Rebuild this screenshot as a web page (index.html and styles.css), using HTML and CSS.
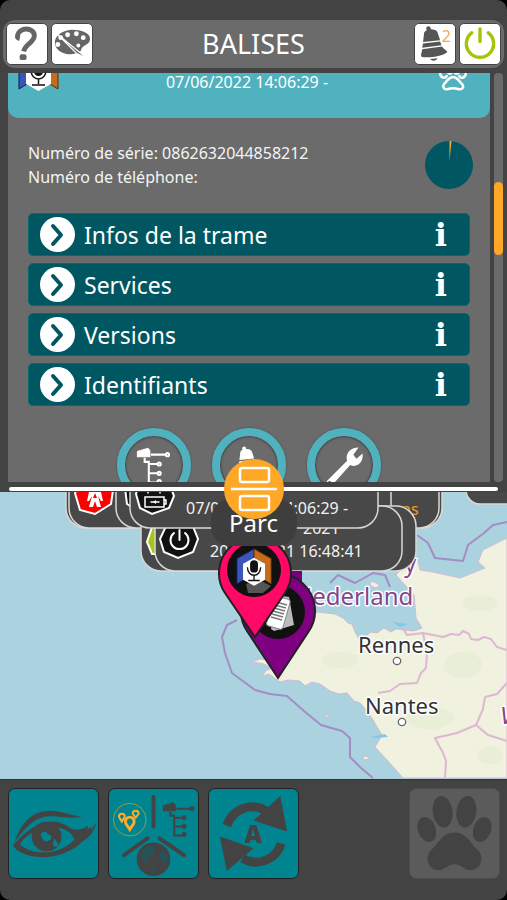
FILE: index.html
```html
<!DOCTYPE html>
<html lang="fr">
<head>
<meta charset="utf-8">
<meta name="viewport" content="width=device-width, initial-scale=1">
<title>Balises</title>
<link rel="stylesheet" href="styles.css">
</head>
<body>
<svg width="0" height="0" class="defs" aria-hidden="true">
  <defs>
    <g id="tree" fill="none" stroke="currentColor" stroke-width="2">
      <path d="M1 4l10-3 2 2v6H1z" fill="currentColor" stroke-width="1"/>
      <path d="M14 7h14M8 10v4h4v20h9M12 16h8M12 25h8"/>
      <circle cx="30" cy="7" r="1.500"/><circle cx="22" cy="16" r="1.500"/><circle cx="22" cy="25" r="1.500"/><circle cx="22" cy="33" r="1.500"/>
    </g>
    <g id="bell">
      <circle cx="15" cy="4" r="2.500"/>
      <path d="M10 10c0-6 13-7 15-2l3 9-19 2z"/>
      <path d="M9 20.500l19-2 1.500 4-21.500 3z"/>
      <path d="M8 27l22-3c2 3 5 4 6 6-3 4-23 8-29 5-1-2 1-5 1-8z"/>
      <path d="M17 38c2 3 7 2 8-1z"/>
    </g>
    <g id="mic">
      <path d="M20.500-7L1 4v29l8-5V10l11.500-6z" fill="#3d55b8" stroke="#111c50"/>
      <path d="M20.500-7L40 4v29l-8-5V10L20.500 4z" fill="#c66b1a" stroke="#5b2c00"/>
      <path d="M20.500 3L33 10v18l-12.500 7L8 28V10z" fill="#fff"/>
      <rect x="16" y="6" width="9" height="14" rx="4.500" fill="#111"/>
      <path d="M13 14c0 12 15 12 15 0M20.500 23v5M14 29h13" fill="none" stroke="#111" stroke-width="1.500"/>
    </g>
  </defs>
</svg>
<div class="app">
  <header class="topbar">
    <div class="group">
      <button class="tool" aria-label="Aide"><svg viewBox="0 0 41 41"><path d="M13 15c-4-1-2-6 1-8 6-4 14-1 14 5 0 7-9 8-11 16" fill="none" stroke="#666" stroke-width="5"/><rect x="13" y="31" width="7" height="6" rx="2" fill="#666"/></svg></button>
      <button class="tool" aria-label="Couleurs"><svg viewBox="0 0 41 41"><path d="M3 21C2 12 10 7 20 6c10 0 19 3 19 9 0 7-8 6-9 11 0 6-23 9-27-5z" fill="#666"/><g fill="#fff"><circle cx="9" cy="14" r="2.500"/><circle cx="16" cy="11" r="2.500"/><circle cx="25" cy="10" r="2.500"/><circle cx="32" cy="14" r="2.500"/><circle cx="6" cy="21" r="2.500"/><circle cx="27" cy="22" r="2"/></g><path d="M5 10l22 18 10 8-12-6z" fill="#666" stroke="#fff" stroke-width="1.200"/></svg></button>
    </div>
    <h1>BALISES</h1>
    <div class="group">
      <button class="tool" aria-label="Alertes"><svg viewBox="0 0 41 41"><use href="#bell" fill="#555" transform="translate(0 1) scale(.92)"/></svg><span class="count">2</span></button>
      <button class="tool" aria-label="Quitter"><svg viewBox="0 0 41 41"><path d="M12 9a14 14 0 1 0 17 0M20.500 5v13" fill="none" stroke="#a3c408" stroke-width="3.500" stroke-linecap="round"/></svg></button>
    </div>
  </header>

  <main class="panel">
    <section class="card">
      <div class="card-head">
        <svg class="badge" viewBox="0 0 41 18"><use href="#mic" y="-17"/></svg>
        <time>07/06/2022 14:06:29 -</time>
        <svg class="paw" viewBox="0 0 30 18" fill="none" stroke="#fff" stroke-width="2.500"><path d="M2 0c1 6 6 6 7 2M9-2c2 4 5 3 5 0M16-2c1 4 5 3 5 0M28 0c-1 6-6 6-7 2M15 4c5 0 6 5 9 7 3 4-1 6-4 5s-7-1-10 0-6-1-4-5c3-2 4-7 9-7z"/></svg>
      </div>
      <div class="card-body">
        <div class="summary">
          <p>Numéro de série: 0862632044858212<br>Numéro de téléphone:</p>
          <svg class="pie" viewBox="0 0 48 48"><circle cx="24" cy="24" r="24" fill="#005762"/><path d="M24.500 20V0h2z" fill="#f4ad35"/></svg>
        </div>
        <div class="rows">
          <button class="row"><span class="chevron"><svg viewBox="0 0 35 35"><path d="M13 9l8 9-8 9"/></svg></span><span class="label">Infos de la trame</span><span class="info">i</span></button>
          <button class="row"><span class="chevron"><svg viewBox="0 0 35 35"><path d="M13 9l8 9-8 9"/></svg></span><span class="label">Services</span><span class="info">i</span></button>
          <button class="row"><span class="chevron"><svg viewBox="0 0 35 35"><path d="M13 9l8 9-8 9"/></svg></span><span class="label">Versions</span><span class="info">i</span></button>
          <button class="row"><span class="chevron"><svg viewBox="0 0 35 35"><path d="M13 9l8 9-8 9"/></svg></span><span class="label">Identifiants</span><span class="info">i</span></button>
        </div>
        <div class="rounds">
          <button class="round" aria-label="Arborescence"><svg viewBox="0 0 56 56" color="#fff"><use href="#tree" x="11" y="11"/></svg></button>
          <button class="round" aria-label="Alerte"><svg viewBox="0 0 56 56"><use href="#bell" fill="#fff" transform="translate(12 9) scale(.75)"/></svg></button>
          <button class="round" aria-label="Réglages"><svg viewBox="0 0 56 56"><path d="M12 43l19-19c-2-7 3-13 11-13l-5 7 3 4 6-5c1 9-6 14-12 11L17 47c-4 3-8 0-5-4z" fill="#fff"/><circle cx="14" cy="45" r="1.500" fill="#555"/></svg></button>
        </div>
      </div>
    </section>
    <div class="track"><div class="thumb"></div></div>
  </main>

  <div class="divider">
    <button class="parc"><span class="split"><svg viewBox="0 0 60 60" fill="none" stroke="#fff" stroke-width="2.500"><rect x="16" y="9" width="29" height="14" rx="2"/><path d="M7 30h46"/><rect x="16" y="37" width="29" height="14" rx="2"/></svg></span>Parc</button>
  </div>

  <section class="map" aria-label="Carte">
    <svg viewBox="0 492 507 287" preserveAspectRatio="xMidYMid slice">
      <g class="land">
        <path d="M396 575l18-20 3 3 3 12 13 2 27 6 25-10-7-6 5-12 24-12v240H403l-16-18-12-13 7-12-5-8-4-7-6-9-7-8-6-2-7-8-8 1-9-3-10-7-8-2-7 4-5-5-12-1-8 2-11-8-6 2 2-5 7-3-8-4-12-2 8-3 9 1 14-27 35-21 17 2 8 4 5 5 4 1 3 8 4 7 8-4 4-3 6 1 7-5 7 4 5-3 8 1 10 1 8-3-6-10-2-23z"/>
        <path d="M371 581l5 2 4 3-5 2-5-3zM325 714l4 2-3 2zM363 757l4-1 2 3-5 1z"/>
      </g>
      <g fill="#e3edd0" opacity=".5"><ellipse cx="463" cy="665" rx="19" ry="13"/><ellipse cx="480" cy="603" rx="17" ry="8"/><ellipse cx="430" cy="718" rx="24" ry="11"/><ellipse cx="340" cy="660" rx="18" ry="8"/><ellipse cx="490" cy="755" rx="13" ry="9"/></g>
      <path d="M392 622l16 2-8 3zM371 737l14-3 3 3-13 1zM376 743l10-1" fill="#82c7ec"/>
      <g class="sea-border">
        <path d="M237 620l-10 5-5 12 3 16 7 20 23 17 15 4 17 2 17 15 17 14 21 6 8 7v19l11 11 12 10"/>
        <path d="M417 535l11 8 7 15 28 3 5-16 16-12 9-8 14-3M330 583l8-8 17 8 18-10 12 2 5 12"/>
      </g>
      <g class="region">
        <path d="M402 627l5 8 16-2 20 4 8-3 8 1 4-4 6 3 2 5 7 1 6-3 7 2 6 8 10 3M423 633l4 20-1 15-5 5-4 10-17 1-10 7-12 2M507 683l-10 11-12 3-2 12-7 16-19 8-22 5 8 15 3 8-1 17M476 725l12 10 19 6"/>
      </g>
      <g class="place">
        <text x="294" y="605" class="country">Nederland</text>
        <text x="404" y="572" class="country">y</text>
        <text x="500" y="724" class="country slant">V</text>
        <text x="358" y="653">Rennes</text>
        <text x="365" y="714">Nantes</text>
      </g>
      <g fill="#fff" stroke="#666" stroke-width="1.300"><circle cx="397" cy="661" r="3.700"/><circle cx="402" cy="722" r="3.700"/></g>

      <g class="plate">
        <rect x="466" y="440" width="80" height="64" rx="14"/>
        <rect x="66" y="440" width="376" height="88" rx="20"/>
        <rect x="69" y="440" width="370" height="88" rx="20"/>
      </g>
      <text x="392" y="515" class="stamp warn">ens</text>
      <path class="hex" d="M84 477h22l7 13-2 14-16 10-15-4-5-17z" fill="#f00"/>
      <path d="M89 492h12l2 9h-2l-3-5 3 11h-4l-2-6-2 6h-4l3-11-3 5h-2z" fill="#fff"/>
      <path d="M95 493l-2 5h4z" fill="#f00"/>
      <g class="plate">
        <rect x="116" y="440" width="275" height="88" rx="20"/>
        <rect x="141" y="506" width="275" height="65" rx="20"/>
      </g>
      <path class="hex" d="M125 488l2 16 13 8v-30z" fill="#111"/>
      <path class="hex" d="M152 527l-5 15 5 12h6v-27z" fill="#a9c514"/>
      <g class="plate"><rect x="155" y="506" width="247" height="65" rx="20"/></g>
      <text x="303" y="534" class="stamp">2021</text>
      <text x="210" y="557" class="stamp">20/11/2021 16:48:41</text>
      <path class="hex" d="M167 524h25l6 15-5 13-15 6-14-6-4-13z" fill="#111"/>
      <path d="M174 533a9 9 0 1 0 11 0M179.500 530v10" class="glyph"/>
      <g class="plate"><rect x="130" y="440" width="248" height="88" rx="20"/></g>
      <path class="hex" d="M140 478h27l7 18-5 12-17 6-12-6-4-14z" fill="#111"/>
      <path d="M145 497h19v10h-19zM164 500h2v4h-2M151 502h8M148 493v-5h12v5" class="glyph thin"/>
      <path d="M153 502l3-2v4z" fill="#fff"/>
      <text x="186" y="514" class="stamp">07/06/2022 14:06:29 -</text>

      <path d="M290 571h12v14h-12z" fill="#74007b"/>
      <g class="pin"><path d="M278 678l-31-47a37 37 0 1 1 62 0z" fill="#800082"/></g>
      <circle cx="278" cy="612" r="27" fill="#111"/>
      <path d="M271 629l4-34 14 2 5 28-20 6z" fill="#bbb"/>
      <rect x="270" y="597" width="17" height="31" rx="3" fill="#fff" stroke="#888" transform="rotate(16 278 612)"/>
      <path d="M276 602l11 3M275 605l11 3M274 608l11 3M273 611l11 3M272 614l11 3M271 617l11 3" stroke="#777" stroke-width="1.500"/>
      <g class="pin"><path d="M255 637l-30-44a36 36 0 1 1 60 0z" fill="#ff0866"/></g>
      <circle cx="254" cy="570" r="27" fill="#111"/>
      <path d="M246 584l13-4 12 6-8 7h-15z" fill="#555"/>
      <use href="#mic" transform="translate(236 555) scale(.88)"/>
    </svg>
  </section>

  <nav class="dock">
    <button class="tile" aria-label="Vue"><svg viewBox="0 0 90 90"><path d="M6 53C12 34 24 22 41 22c12 0 21 5 33 6-14 3-25-2-37 0C23 30 14 43 6 53z"/><path fill-rule="evenodd" d="M4 57c19-22 39-31 57-18 7 4 14 2 19-2l-1 4 5-3-1 4 5-8c-2 14-12 17-19 24-21 14-44 14-61 4zM11 56c12 11 40 12 55-5-6-18-42-16-55 5z"/><circle cx="38" cy="48" r="15"/><path d="M32 46c2-5 8-2 7 0 4-1 6 5 1 6-3 3-7-1-8-6zM46 50l4 6-3 3-3-3z" fill="#008490"/></svg></button>
    <button class="tile" aria-label="Modes"><svg viewBox="0 0 90 90"><g stroke="#434343" stroke-width="4" stroke-linecap="round"><path d="M45 8v30M39 50L15 67M51 50l25 17"/></g><circle cx="45" cy="71" r="17"/><path d="M34 61l10-4 3 6-7 5-1 8-6-6zM51 62l8 5-1 8-6-3zM43 78l6 2-4 6z" fill="#24545a"/><g color="#434343"><use href="#tree" x="54" y="13"/></g><g fill="none" stroke="#ffab2b"><circle cx="21" cy="31" r="16.500" stroke="#90a04a"/><path d="M21 41l-4-6a4.500 4.500 0 1 1 8 0z" stroke-width="3"/><path d="M13 33l-3-5a3 3 0 1 1 6 0zM27 29l-3-4a3 3 0 1 1 6 0z" stroke-width="2"/></g></svg></button>
    <button class="tile" aria-label="Actualisation automatique"><svg viewBox="0 0 90 90"><path d="M18 37c7-19 29-25 43-12M73 55c-5 17-25 24-39 15" fill="none" stroke="#434343" stroke-width="9"/><path d="M72 7l7 36-34-11zM11 48l34 12-27 23z"/></svg><span class="auto">A</span></button>
    <button class="tile off" aria-label="Animaux"><svg viewBox="0 0 90 90"><ellipse cx="33" cy="23" rx="10" ry="16" transform="rotate(-8 33 23)"/><ellipse cx="57" cy="23" rx="10" ry="16" transform="rotate(8 57 23)"/><ellipse cx="17" cy="41" rx="9" ry="13" transform="rotate(-20 17 41)"/><ellipse cx="73" cy="41" rx="9" ry="13" transform="rotate(20 73 41)"/><path d="M45 44c13 0 16 12 25 19 6 10-1 20-10 19-6-1-9-6-15-6s-9 5-15 6c-9 1-16-9-10-19 9-7 12-19 25-19z"/></svg></button>
  </nav>
</div>
</body>
</html>
```

FILE: styles.css
```css
* { box-sizing: border-box; }

body {
  margin: 0;
  background: #000;
  color: #fff;
  font-family: "Noto Sans", sans-serif;
}

button {
  margin: 0;
  padding: 0;
  border: 0;
  background: none;
  color: inherit;
  font: inherit;
}

svg { display: block; }
.defs { position: absolute; }

.app {
  display: flex;
  flex-direction: column;
  height: 100vh;
  min-height: 640px;
  padding-top: 20px;
  background: #434343;
  border-radius: 10px;
  overflow: hidden;
}

.topbar {
  display: flex;
  align-items: center;
  justify-content: space-between;
  height: 48px;
  margin: 0 3px 5px;
  padding: 0 3px;
  background: #6b6b6b;
  border-radius: 12px;
}

.topbar h1 {
  margin: 0;
  font-size: 27px;
  font-weight: 400;
  line-height: 40px;
}

.group { display: flex; gap: 3px; }

.tool {
  position: relative;
  width: 42px;
  height: 42px;
  background: #fff;
  border: 1px solid #444;
  border-radius: 5px;
}

.count {
  position: absolute;
  top: 2px;
  right: 4px;
  color: #f7a850;
  font-size: 16px;
  line-height: 20px;
}

.panel {
  display: flex;
  flex: 409 1 0;
  gap: 4px;
  min-height: 0;
  padding: 0 4px 0 8px;
  overflow: hidden;
}

.card {
  flex: 1;
  background: #6b6b6b;
  overflow: hidden;
}

.card-head {
  display: grid;
  grid-template-columns: 1fr auto 1fr;
  height: 45px;
  padding: 0 22px 0 10px;
  background: #4fb2be;
  border-radius: 0 0 10px 10px;
}

.card-head time {
  padding-left: 8px;
  font-size: 16px;
  line-height: 18px;
}

.badge { width: 41px; height: 18px; }
.paw { width: 30px; height: 18px; justify-self: end; }

.card-body { padding: 23px 20px 0; }

.summary {
  display: flex;
  justify-content: space-between;
  margin-right: -3px;
}

.summary p {
  margin: 0;
  font-size: 16px;
  line-height: 24px;
  color: #f4f4f4;
}

.pie { width: 48px; height: 48px; }

.rows {
  display: grid;
  gap: 7px;
  margin: 24px 0 22px;
}

.row {
  display: flex;
  align-items: center;
  gap: 9px;
  height: 43px;
  padding: 0 22px 0 11px;
  background: #005762;
  border: 1px solid #0c6670;
  border-radius: 5px;
  font-size: 23px;
  line-height: 40px;
  text-align: left;
}

.label { flex: 1; }

.chevron {
  width: 35px;
  height: 35px;
  background: #fff;
  border-radius: 50%;
}

.chevron path {
  fill: none;
  stroke: #005762;
  stroke-width: 4;
  stroke-linecap: round;
  stroke-linejoin: round;
}

.info {
  font-family: "DejaVu Serif", serif;
  font-size: 32px;
  font-weight: 700;
}

.rounds {
  display: flex;
  justify-content: center;
  gap: 21px;
}

.round {
  width: 74px;
  height: 74px;
  border: 8px solid #4fb2be;
  border-radius: 50%;
  box-shadow: inset 0 0 2px 1px #444, 0 0 2px #444;
}

.track {
  width: 9px;
  padding-top: 109px;
  background: #6b6b6b;
  border-radius: 4px;
}

.thumb {
  height: 73px;
  background: #ffa726;
  border-radius: 5px;
}

.divider {
  position: relative;
  z-index: 1;
  height: 10px;
  padding: 5px 9px 0;
}

.divider::before {
  content: "";
  display: block;
  height: 4px;
  background: #fff;
  border-radius: 2px;
}

.parc {
  position: absolute;
  top: 17px;
  left: 50%;
  width: 86px;
  height: 47px;
  margin-left: -43px;
  background: #3e3e3e;
  border-radius: 20px;
  font-size: 24px;
  line-height: 40px;
}

.split {
  position: absolute;
  top: -40px;
  left: 13px;
  width: 60px;
  height: 60px;
  background: #ffa726;
  border-radius: 50%;
}

.map {
  position: relative;
  flex: 287 1 0;
  min-height: 0;
  background: #aad3df;
  overflow: hidden;
}

.map > svg {
  position: absolute;
  width: 100%;
  height: 100%;
}

.land { fill: #f0f1de; stroke: #d4b9d2; stroke-width: 1; }
.sea-border { fill: none; stroke: #a58cc5; stroke-width: 2; stroke-linejoin: round; }
.region { fill: none; stroke: #dcb8d2; stroke-width: 2; stroke-linejoin: round; }

.place {
  fill: #333;
  stroke: #fff;
  stroke-width: 3px;
  stroke-linejoin: round;
  paint-order: stroke;
  font-size: 22px;
}

.country { fill: #854589; font-size: 24px; }
.slant { font-style: italic; }

.plate { fill: #484848; stroke: #d8d8d8; stroke-width: 1.5; }
.stamp { fill: #f2f2f2; font-size: 16px; }
.warn { fill: #f39a25; }
.hex { stroke: #fff; stroke-width: 2; }
.glyph { fill: none; stroke: #fff; stroke-width: 2; stroke-linecap: round; }
.thin { stroke-width: 1.5; }
.pin { stroke: #222; stroke-width: 2; }

.dock {
  display: flex;
  gap: 9px;
  padding: 8px 7px 21px 8px;
  border-top: 1px solid #333;
}

.tile {
  position: relative;
  width: 91px;
  height: 91px;
  background: #008490;
  border: 1px solid #222;
  border-radius: 7px;
}

.tile svg { fill: #434343; }

.off {
  margin-left: auto;
  background: #5b5b5b;
  border-color: #4c4c4c;
}

.auto {
  position: absolute;
  inset: 0;
  color: #434343;
  font-size: 24px;
  font-weight: 900;
  line-height: 90px;
  text-align: center;
}
```
